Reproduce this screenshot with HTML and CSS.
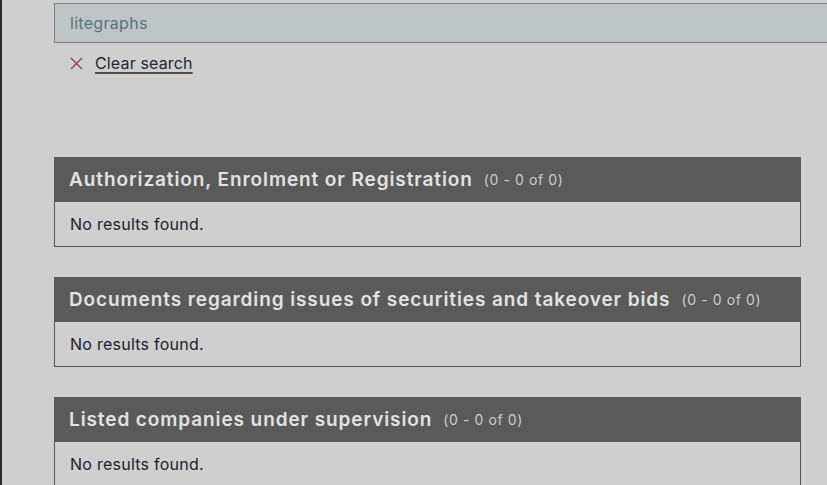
FILE: index.html
```html
<!DOCTYPE html>
<html lang="en">
<head>
<meta charset="utf-8">
<title>Search results</title>
<link rel="stylesheet" href="styles.css">
</head>
<body>
<div class="page">
  <div class="search-box">
    <div class="search-input">litegraphs</div>
    <a class="clear" href="#">
      <svg class="clear-icon" width="13" height="13" viewBox="0 0 13 13"><path d="M1 1 L12 12 M12 1 L1 12" stroke="currentColor" stroke-width="1.5" fill="none"/></svg>
      <span class="clear-text">Clear search</span>
    </a>
  </div>
  <div class="results">
    <section class="group">
      <div class="group-head"><h2 class="group-title">Authorization, Enrolment or Registration</h2><span class="group-count">(0 - 0 of 0)</span></div>
      <div class="group-body">No results found.</div>
    </section>
    <section class="group">
      <div class="group-head"><h2 class="group-title">Documents regarding issues of securities and takeover bids</h2><span class="group-count">(0 - 0 of 0)</span></div>
      <div class="group-body">No results found.</div>
    </section>
    <section class="group">
      <div class="group-head"><h2 class="group-title">Listed companies under supervision</h2><span class="group-count">(0 - 0 of 0)</span></div>
      <div class="group-body">No results found.</div>
    </section>
  </div>
</div>
</body>
</html>
```

FILE: styles.css
```css
html, body {
  margin: 0;
  padding: 0;
  background: #cfcfcf;
  overflow: hidden;
}
body {
  font-family: "Inter", "Noto Sans", sans-serif;
  width: 827px;
  height: 485px;
}
.page {
  border-left: 2px solid #2b2b2b;
  height: 485px;
  box-sizing: border-box;
  padding: 3px 0 0 52px;
}
.search-input {
  box-sizing: border-box;
  width: 800px;
  height: 40px;
  background: #bfc4c6;
  border: 1px solid #7b8083;
  padding: 0 15px;
  display: flex;
  align-items: center;
  font-size: 16px;
  letter-spacing: 0.3px;
  color: #56747b;
}
.clear {
  display: flex;
  align-items: center;
  gap: 12px;
  margin: 10px 0 0 16px;
  height: 20px;
  text-decoration: none;
}
.clear-icon {
  color: #9a4858;
}
.clear-text {
  font-size: 16px;
  letter-spacing: 0.15px;
  color: #1d2633;
  text-decoration: underline;
  text-decoration-thickness: 1.5px;
  text-underline-offset: 3px;
  text-decoration-color: #4a4f55;
}
.results {
  margin-top: 84px;
  width: 747px;
  display: flex;
  flex-direction: column;
  gap: 30px;
}
.group {
  box-shadow: 2px 0 0 0 #cfcfcf, 3px 0 0 0 #d6d6d6;
}
.group-head {
  height: 45px;
  background: #5a5a5a;
  display: flex;
  align-items: center;
  padding: 0 15px;
  gap: 11px;
}
.group-title {
  margin: 0;
  font-size: 19px;
  font-weight: 600;
  letter-spacing: 0.9px;
  color: #e2e2e2;
}
.group-count {
  font-size: 14px;
  letter-spacing: 0.6px;
  color: #cdcdcd;
}
.group-body {
  box-sizing: border-box;
  height: 45px;
  border: 1px solid #555;
  border-top: none;
  padding: 0 15px;
  display: flex;
  align-items: center;
  font-size: 16px;
  letter-spacing: 0.25px;
  color: #1b2130;
}
```
